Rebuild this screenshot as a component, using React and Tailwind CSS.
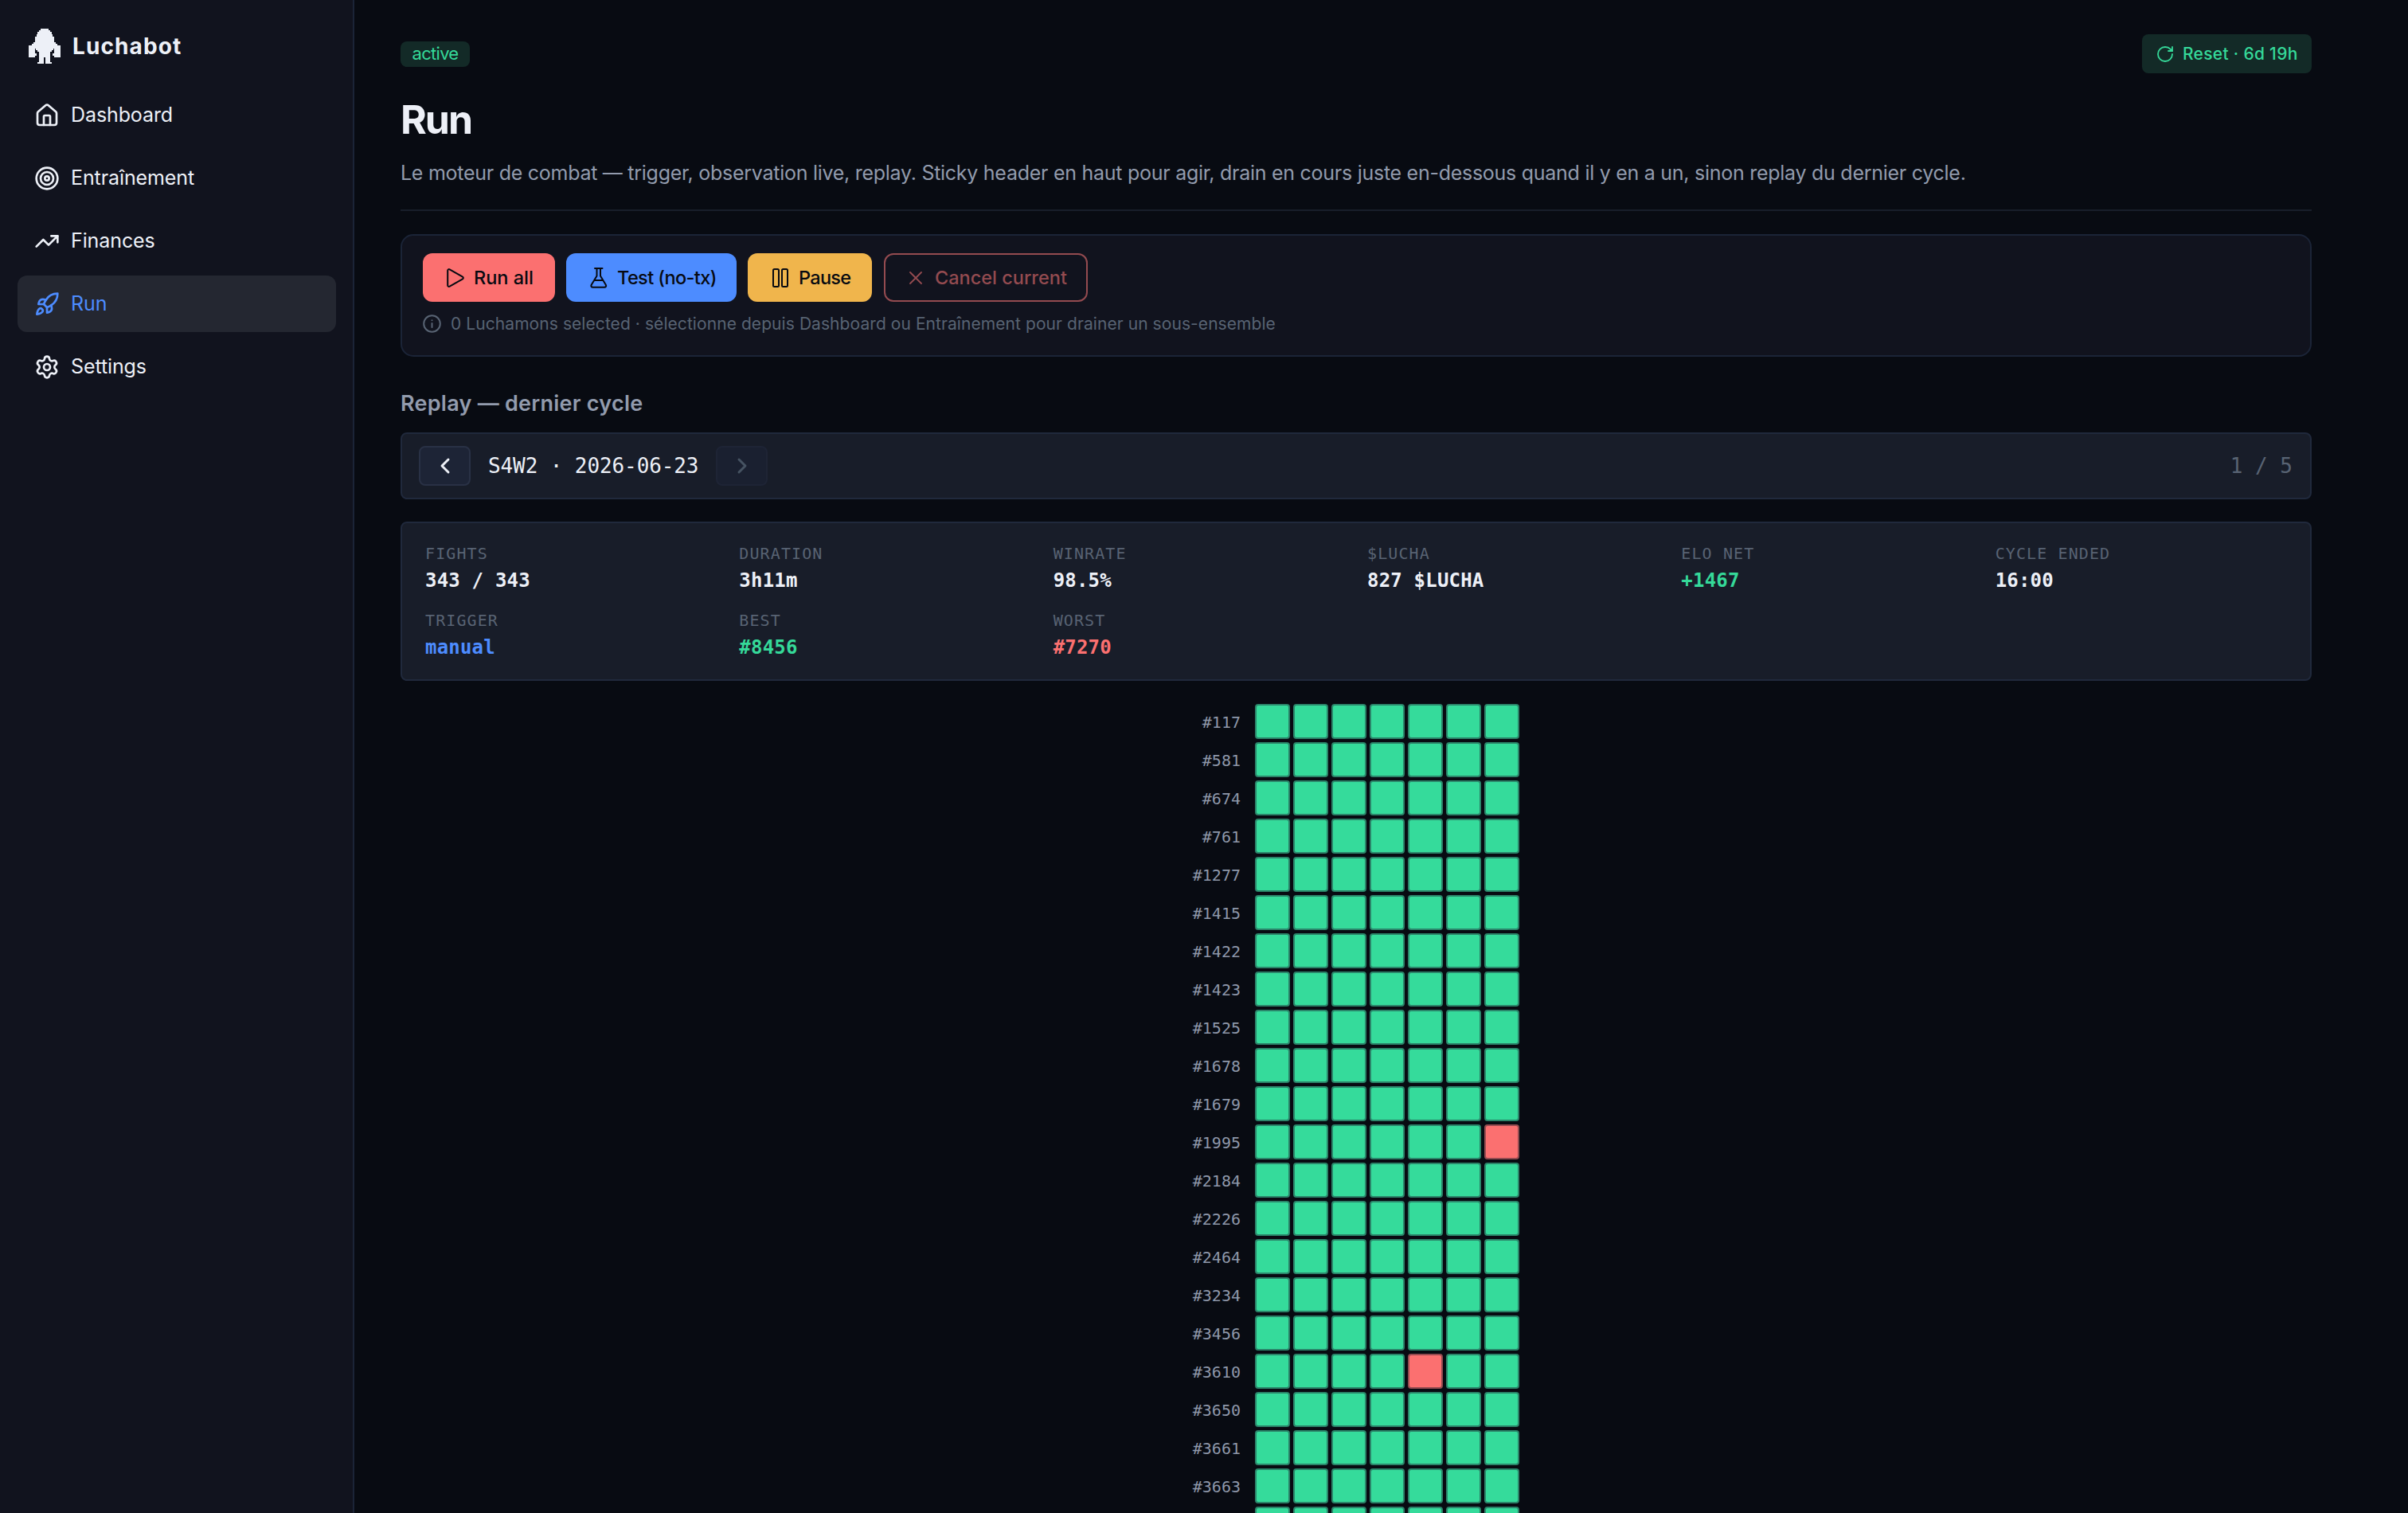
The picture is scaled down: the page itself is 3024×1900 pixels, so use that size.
import { House, Target, TrendingUp, Rocket, Settings, RotateCw, ChevronLeft, ChevronRight } from 'lucide-react'

const navItems = [
    { label: 'Dashboard', icon: House },
    { label: 'Entraînement', icon: Target },
    { label: 'Finances', icon: TrendingUp },
    { label: 'Run', icon: Rocket, active: true },
    { label: 'Settings', icon: Settings },
];

const stats = [
    { label: 'FIGHTS', value: '343 / 343', color: 'text-[#edf0f7]' },
    { label: 'DURATION', value: '3h11m', color: 'text-[#edf0f7]' },
    { label: 'WINRATE', value: '98.5%', color: 'text-[#edf0f7]' },
    { label: '$LUCHA', value: '827 $LUCHA', color: 'text-[#edf0f7]' },
    { label: 'ELO NET', value: '+1467', color: 'text-[#35d999]' },
    { label: 'CYCLE ENDED', value: '16:00', color: 'text-[#edf0f7]' },
    { label: 'TRIGGER', value: 'manual', color: 'text-[#4d8cff]' },
    { label: 'BEST', value: '#8456', color: 'text-[#35d999]' },
    { label: 'WORST', value: '#7270', color: 'text-[#fb7070]' },
];

// the last row is only half on screen, its label stays empty
const fighters = [
    '#117', '#581', '#674', '#761', '#1277', '#1415', '#1422', '#1423', '#1525', '#1678', '#1679',
    '#1995', '#2184', '#2226', '#2464', '#3234', '#3456', '#3610', '#3650', '#3661', '#3663', '',
];

// fighter -> index of the lost fight
const losses = { '#1995': 6, '#3610': 4 };

const Logo = () => (
    <svg viewBox="0 0 40 44" className="w-10 h-11" fill="#edf0f7" shapeRendering="crispEdges">
        <path d="M15 0H25V2H27V4H29V7H30V10H32V17H34V19H36V21H40V36H32V34H30V31H32V25H31V27H29V29H27V42H29V44H21V36H19V44H11V42H13V29H11V27H9V25H8V31H10V34H8V36H0V21H4V19H6V17H8V10H10V7H11V4H13V2H15Z" />
    </svg>
);

const PlayIcon = () => (
    <svg viewBox="0 0 22 24" className="w-[22px] h-6" fill="none" stroke="currentColor" strokeWidth="2" strokeLinejoin="round">
        <path d="M1.200 2.800V21.200C1.200 22.600 2.500 23.300 3.700 22.700L20 13.300C21.100 12.700 21.100 11.300 20 10.700L3.700 1.300C2.500 .7 1.200 1.400 1.200 2.800Z" />
    </svg>
);

const FlaskIcon = () => (
    <svg viewBox="0 0 22 26" className="w-[22px] h-[26px]" fill="none" stroke="currentColor" strokeWidth="2" strokeLinejoin="round" strokeLinecap="round">
        <path d="M6 1h9.500M8.500 1v9.500L1.800 21.500c-1 1.800-.2 3.300 1.700 3.300h14.500c1.900 0 2.700-1.500 1.700-3.300L13 10.500V1M5.500 16h10.500" />
    </svg>
);

const PauseIcon = () => (
    <svg viewBox="0 0 20 24" className="w-5 h-6" fill="none" stroke="currentColor" strokeWidth="2">
        <rect x="1" y="1" width="7" height="22" rx="1.500" />
        <rect x="12" y="1" width="7" height="22" rx="1.500" />
    </svg>
);

const CloseIcon = () => (
    <svg viewBox="0 0 16 16" className="size-4" fill="none" stroke="currentColor" strokeWidth="1.800" strokeLinecap="round">
        <path d="M1 1l14 14M15 1L1 15" />
    </svg>
);

const InfoIcon = () => (
    <svg viewBox="0 0 23 23" className="w-[23px] h-[23px]" fill="none" stroke="currentColor" strokeWidth="2" strokeLinecap="round">
        <circle cx="11.500" cy="11.500" r="10.300" />
        <path d="M11.500 11v5M11.500 7.200v.1" />
    </svg>
);

const Sidebar = () => (
    <aside className="w-[445px] shrink-0 bg-[#11131e] border-r-2 border-[#1b2437] pl-[22px] pr-[21px] pt-9">
        <div className="flex items-center h-11 pl-[14px] gap-[15px]">
            <Logo />
            <div className="text-[28px] font-bold tracking-[1.1px] text-[#edf0f7]">Luchabot</div>
        </div>
        <nav className="mt-[29px] flex flex-col gap-2">
            {navItems.map(({ label, icon: Icon, active }) => (
                <div
                    key={label}
                    className={active
                        ? 'flex items-center gap-[14px] h-[71px] pl-[21px] rounded-xl text-[25px] tracking-[-0.1px] bg-[#242731] text-[#4d8cff]'
                        : 'flex items-center gap-[14px] h-[71px] pl-[21px] rounded-xl text-[25px] tracking-[-0.1px] text-[#edf0f7]'}
                >
                    <Icon size={32} strokeWidth={2} />
                    <span>{label}</span>
                </div>
            ))}
        </nav>
    </aside>
);

const Heatmap = () => (
    <div className="mt-[29px] ml-[945px] flex flex-col gap-1">
        {fighters.map((name) => (
            <div key={name} className="flex items-center gap-1">
                <div className="w-[110px] mr-[14px] pt-[2px] text-right text-xl text-[#8e97a9] font-[DejaVu_Sans_Mono,monospace]">{name}</div>
                {[0, 1, 2, 3, 4, 5, 6].map((i) => (
                    <div
                        key={i}
                        className={losses[name] === i
                            ? 'size-11 rounded border-2 border-[#944b50] bg-[#fb7070]'
                            : 'size-11 rounded border-2 border-[#2b856a] bg-[#35db9b]'}
                    />
                ))}
            </div>
        ))}
    </div>
);

const App = () => {
    return (
        <div className="flex w-[3024px] h-[1900px] overflow-hidden bg-[#080b12] font-[Inter,sans-serif]">
            <Sidebar />

            <main className="w-[2400px] ml-[58px] pt-[43px]">
                <div className="flex justify-between items-center h-[49px]">
                    <div className="flex items-center justify-center w-[87px] h-8 rounded-lg bg-[#132a27] text-[#35d999] text-[22px] tracking-[-0.7px]">active</div>
                    <div className="flex items-center w-[213px] h-[49px] pl-[17px] gap-[10px] rounded-lg bg-[#132a27] text-[#35d999] text-[21px] tracking-[0.3px] font-medium">
                        <RotateCw size={24} strokeWidth={1.8} />
                        <span className="whitespace-nowrap">Reset · 6d 19h</span>
                    </div>
                </div>

                <h1 className="mt-[26px] h-16 leading-[64px] text-[50px] font-bold tracking-[-2px] text-[#edf0f7]">Run</h1>
                <p className="mt-[17px] h-9 leading-9 text-[25px] tracking-[-0.27px] text-[#929bad] whitespace-nowrap">
                    Le moteur de combat — trigger, observation live, replay. Sticky header en haut pour agir, drain en cours juste en-dessous quand il y en a un, sinon replay du dernier cycle.
                </p>
                <div className="mt-7 h-[2px] bg-[#181e2a]" />

                <section className="mt-[29px] h-[154px] rounded-2xl border-2 border-[#1b2437] bg-[#11131e] px-[26px] pt-[22px]">
                    <div className="flex h-[61px] text-[23.5px] font-medium text-[#070a11] whitespace-nowrap">
                        <button className="flex items-center w-[166px] pl-[30px] gap-3 rounded-xl bg-[#fb7070]"><PlayIcon />Run all</button>
                        <button className="flex items-center w-[214px] ml-[14px] pl-[30px] gap-3 rounded-xl bg-[#4d8cff] tracking-[-0.6px]"><FlaskIcon />Test (no-tx)</button>
                        <button className="flex items-center w-[156px] ml-[14px] pl-[31px] gap-[13px] rounded-xl bg-[#f0b54c] tracking-[-0.7px]"><PauseIcon />Pause</button>
                        <button className="flex items-center w-[256px] ml-[15px] pl-[30px] gap-4 rounded-xl border-2 border-[#944b50] text-[#944b50]"><CloseIcon />Cancel current</button>
                    </div>
                    <div className="flex items-center mt-3 gap-3 text-[21px] tracking-[0.07px] text-[#586373]">
                        <InfoIcon />
                        <span>0 Luchamons selected · sélectionne depuis Dashboard ou Entraînement pour drainer un sous-ensemble</span>
                    </div>
                </section>

                <h2 className="mt-[39px] h-10 leading-10 text-[27px] font-semibold tracking-[0.25px] text-[#929bad]">Replay — dernier cycle</h2>

                <div className="mt-4 flex items-center h-[84px] pl-[21px] pr-[22px] rounded-lg border-2 border-[#20293c] bg-[#181d29] text-[26px] font-[DejaVu_Sans_Mono,monospace]">
                    <button className="flex items-center justify-center w-[65px] h-[50px] rounded-lg border-2 border-[#293145] bg-[#1d2436] text-[#edf0f7]"><ChevronLeft size={32} strokeWidth={2.2} /></button>
                    <span className="w-[265px] ml-[22px] mr-[21px] tracking-[-0.1px] text-[#edf0f7] whitespace-nowrap">S4W2 · 2026-06-23</span>
                    <button className="flex items-center justify-center w-[65px] h-[50px] rounded-lg border-2 border-[#1e2435] bg-[#1a2030] text-[#465362]"><ChevronRight size={32} strokeWidth={2.2} /></button>
                    <span className="ml-auto text-[#586373]">1 / 5</span>
                </div>

                <div className="mt-7 grid grid-cols-6 gap-x-[26px] gap-y-[18px] h-[200px] pt-[23px] pl-[29px] pr-[27px] content-start rounded-lg border-2 border-[#20293c] bg-[#181d29] font-[DejaVu_Sans_Mono,monospace]">
                    {stats.map((s) => (
                        <div key={s.label} className="h-[66px] whitespace-nowrap">
                            <div className="h-[31px] leading-[30px] text-xl tracking-[1.1px] text-[#586373]">{s.label}</div>
                            <div className={`h-9 leading-9 text-2xl font-bold tracking-[0.2px] ${s.color}`}>{s.value}</div>
                        </div>
                    ))}
                </div>

                <Heatmap />
            </main>
        </div>
    );
}

export default App
